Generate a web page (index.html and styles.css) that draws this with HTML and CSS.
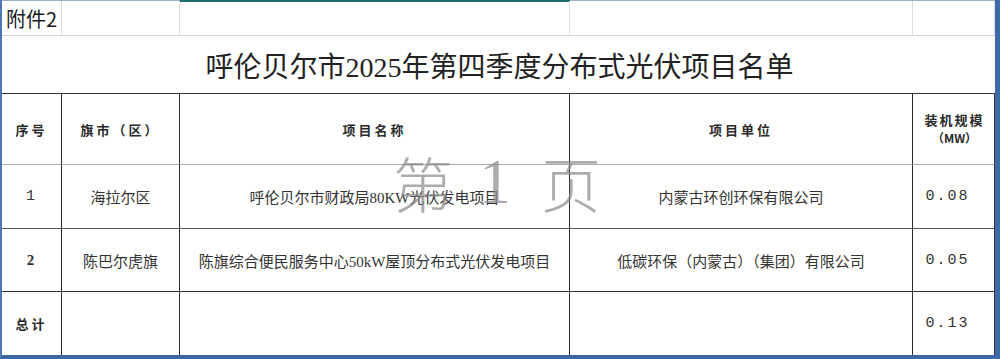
FILE: index.html
```html
<!DOCTYPE html>
<html lang="zh">
<head>
<meta charset="utf-8">
<link rel="stylesheet" href="styles.css">
</head>
<body>
<div class="sheet">
  <div class="topbar">
    <div class="tb tb-a"></div>
    <div class="tb tb-b"></div>
    <div class="tb tb-c"></div>
  </div>
  <div class="grid">
    <div class="c r0 attach">附件2</div>
    <div class="c r0"></div>
    <div class="c r0"></div>
    <div class="c r0"></div>
    <div class="c r0 last"></div>

    <div class="c title">呼伦贝尔市2025年第四季度分布式光伏项目名单</div>

    <div class="c hd">序号</div>
    <div class="c hd">旗市（区）</div>
    <div class="c hd">项目名称</div>
    <div class="c hd">项目单位</div>
    <div class="c hd last cap"><span>装机规模</span><span class="mw">（MW）</span></div>

    <div class="c d1 num">1</div>
    <div class="c d1">海拉尔区</div>
    <div class="c d1">呼伦贝尔市财政局80KW光伏发电项目</div>
    <div class="c d1">内蒙古环创环保有限公司</div>
    <div class="c d1 last num val">0.08</div>

    <div class="c d2 num b">2</div>
    <div class="c d2">陈巴尔虎旗</div>
    <div class="c d2">陈旗综合便民服务中心50kW屋顶分布式光伏发电项目</div>
    <div class="c d2">低碳环保（内蒙古）（集团）有限公司</div>
    <div class="c d2 last num val">0.05</div>

    <div class="c d3 hd">总计</div>
    <div class="c d3"></div>
    <div class="c d3"></div>
    <div class="c d3"></div>
    <div class="c d3 last num val">0.13</div>
  </div>
  <div class="watermark"><span>第</span><span class="one">1</span><span>页</span></div>
</div>
</body>
</html>
```

FILE: styles.css
```css
html, body {
  margin: 0;
  padding: 0;
  background: #ffffff;
}
body {
  width: 1000px;
  height: 359px;
  overflow: hidden;
  font-family: "Liberation Serif", "Noto Sans CJK SC", serif;
  color: #222;
}
.sheet {
  position: relative;
  width: 1000px;
  height: 359px;
  box-sizing: border-box;
  border-left: 2px solid #4d78b6;
  border-right: 5px solid #3f6aa8;
  border-bottom: 4px solid #3d68a6;
  background: #fff;
}
.topbar {
  display: flex;
  height: 1px;
}
.tb-a { width: 178px; background: #9ab0cc; }
.tb-b { width: 390px; background: #1f6b78; height: 2px; }
.tb-c { flex: 1; background: #9ab0cc; }

.grid {
  display: grid;
  grid-template-columns: 60px 118px 390px 343px 82px;
  grid-template-rows: 35px 58px 71px 64px 63px 63px;
}
.c {
  box-sizing: border-box;
  border-right: 1px solid #2a2a2a;
  border-bottom: 1px solid #2a2a2a;
  display: flex;
  align-items: center;
  justify-content: center;
  text-align: center;
  font-size: 15px;
  white-space: nowrap;
}
.c.last { border-right: 1px solid #333; }
.r0 {
  border-right-color: #dcdcdc;
  border-bottom-color: #d6d6d6;
}
.r0.last { border-right-color: #dcdcdc; }
.attach {
  justify-content: flex-start;
  padding-left: 4px;
  font-family: "Noto Sans CJK SC", sans-serif;
  font-size: 20px;
  color: #1a1a1a;
}
.title {
  grid-column: 1 / -1;
  border-right: none;
  border-bottom: 1px solid #333;
  font-size: 28px;
  color: #222;
  padding-left: 2px;
}
.hd {
  font-family: "Noto Sans CJK SC", sans-serif;
  font-weight: 700;
  font-size: 13px;
  letter-spacing: 3px;
  color: #2a2a2a;
  border-bottom-color: #a9a9a9;
}
.cap {
  flex-direction: column;
  line-height: 18px;
  letter-spacing: 2px;
  padding-left: 2px;
}
.mw { font-size: 12px; letter-spacing: 0; }
.d1 { border-bottom-color: #555; color: #333; }
.d2 { border-bottom-color: #333; color: #333; }
.d3 { border-bottom: none; }
.d3.hd { border-bottom: none; }
.num {
  font-family: "Liberation Mono", monospace;
  font-size: 15px;
  letter-spacing: 2px;
  color: #333;
}
.val { padding-right: 12px; }
.b { font-family: "Liberation Serif", serif; font-weight: 700; font-size: 16px; }
.d1, .d2 { font-size: 15px; }

.watermark {
  position: absolute;
  left: 391px;
  top: 146px;
  display: flex;
  gap: 30px;
  font-family: "Noto Sans CJK SC", sans-serif;
  font-weight: 300;
  font-size: 60px;
  line-height: 72px;
  color: rgba(140, 140, 140, 0.72);
  pointer-events: none;
}
.watermark .one {
  font-family: "Liberation Serif", serif;
  font-weight: 400;
  font-size: 64px;
  margin-left: -4px;
}
```
